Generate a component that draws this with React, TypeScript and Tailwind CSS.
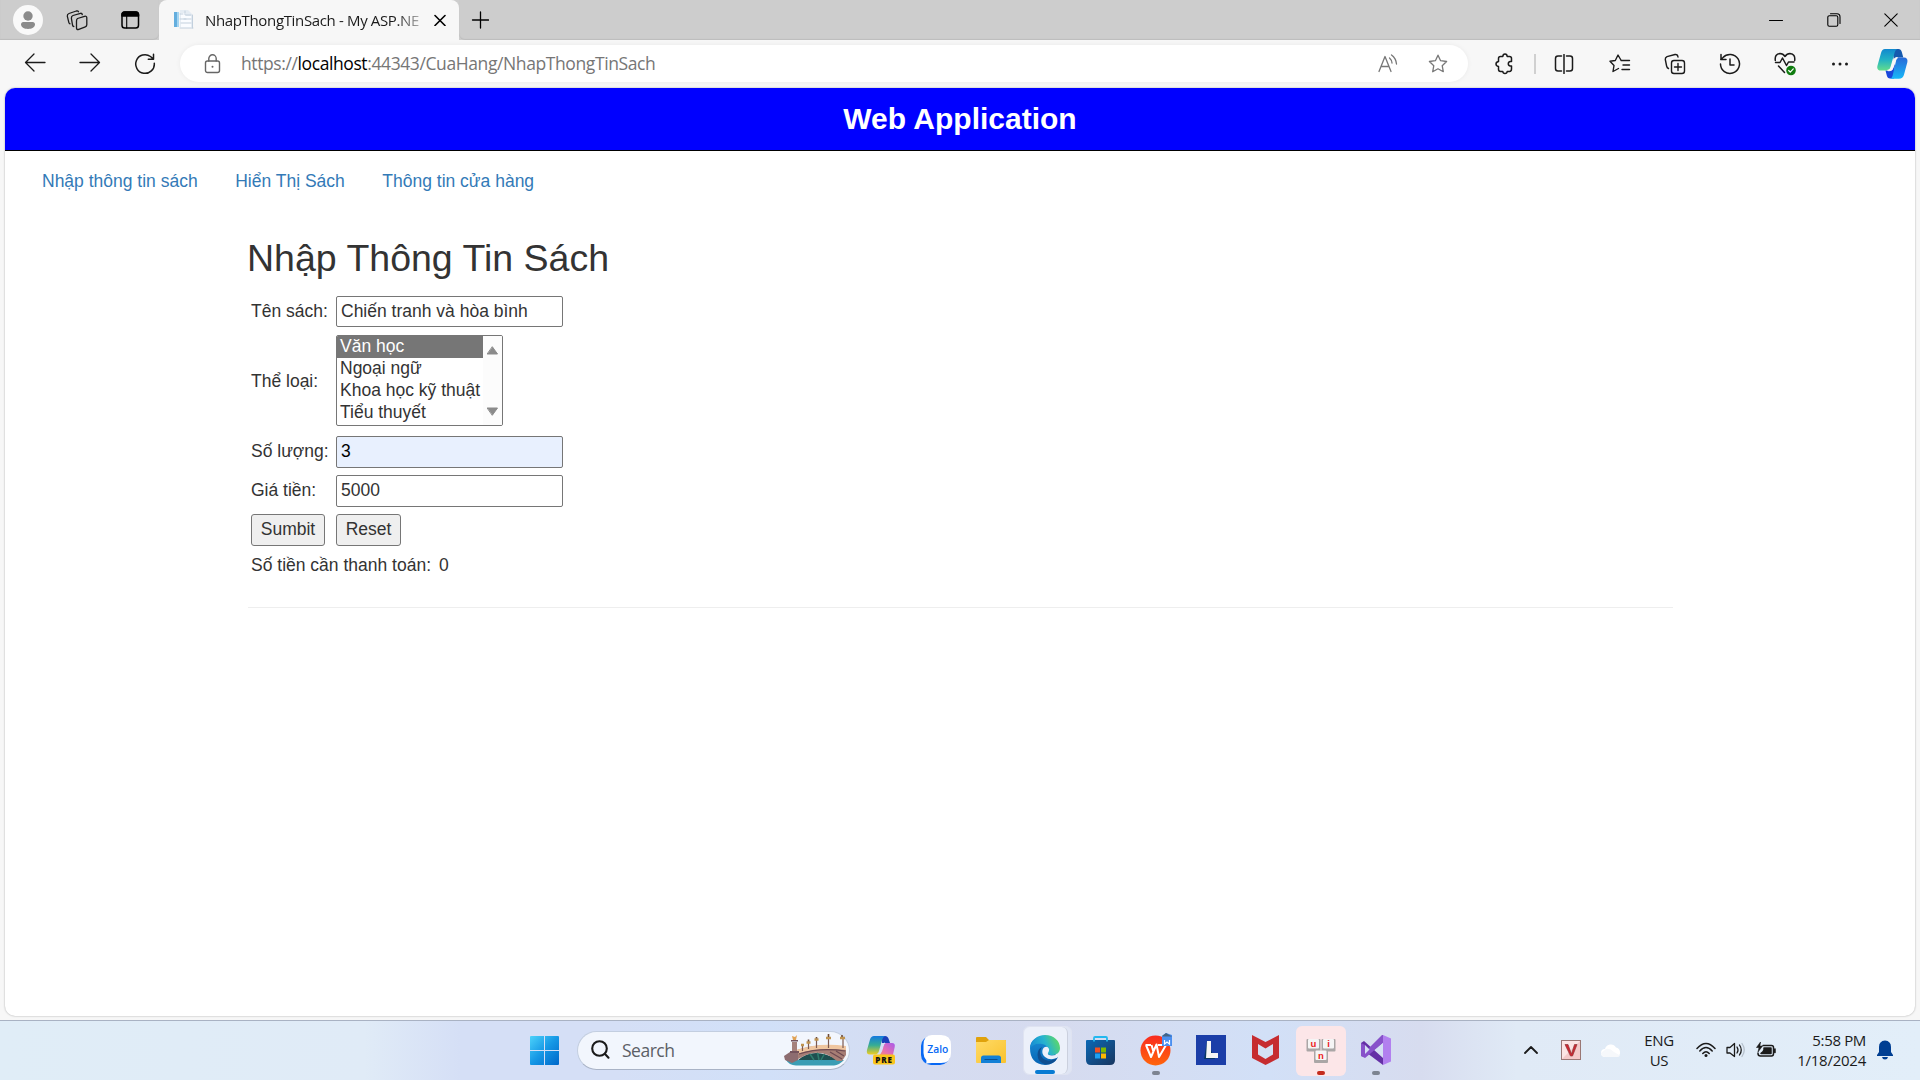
import React from "react";

type IconProps = { w?: number; h?: number; className?: string; sw?: number; children: React.ReactNode };

function Icon({ w = 20, h = 20, className = "text-[#1b1b1b]", sw = 1.3, children }: IconProps) {
  return (
    <svg
      width={w}
      height={h}
      viewBox={`0 0 ${w} ${h}`}
      fill="none"
      stroke="currentColor"
      strokeWidth={sw}
      strokeLinecap="round"
      strokeLinejoin="round"
      className={`shrink-0 ${className}`}
    >
      {children}
    </svg>
  );
}

function Slot({ className = "w-[55px]", children }: { className?: string; children: React.ReactNode }) {
  return <div className={`flex h-full shrink-0 items-center justify-center ${className}`}>{children}</div>;
}

const STAR = "M10 1.2l2.6 5.5 6 .8-4.4 4.2 1.1 6-5.3-2.900-5.300 2.900 1.100-6L1.400 7.500l6-.800z";

function TabBar() {
  return (
    <div className="flex h-10 bg-[#cdcdcd] text-[#1b1b1b]">
      <div className="flex w-[159px] shrink-0 items-center rounded-br-md shadow-[inset_0_-1px_1px_#bdbdbd]">
        <div className="ml-[13px] flex size-[30px] items-center justify-center rounded-full bg-[#f9f9f9]">
          <Icon w={16} h={20} sw={0}>
            <circle cx="8" cy="6" r="4.7" fill="#8b8b8b" />
            <path d="M1 14.3C1 13 2 12 3.200 12h9.600C14 12 15 13 15 14.300 15 17.300 12 19 8 19s-7-1.700-7-4.700z" fill="#8b8b8b" />
          </Icon>
        </div>
        <Icon w={22} h={22} className="ml-[23px] text-[#1b1b1b]" sw={1.3}>
          <path d="M11.500 9.500l7-2.200q2.300-.5 2.300 1.500v7q0 1.500-1.500 2l-6.500 2.500q-2.300.7-2.300-1.300v-7q0-1.900 1-2.500z" />
          <path d="M7.800 17.500q-1 0-1.300-1.500L5.400 9.300Q5.200 7.300 7 6.500L14.500 4.300Q16 4.100 16.300 5.500M4 14.800q-.9-.3-1.200-1.500L1.300 7.200Q1.100 5.200 3 4.500L10.300 2Q12 1.600 12.500 2.700" />
        </Icon>
        <Icon w={20} h={20} className="ml-[32px] text-black" sw={1.5}>
          <rect x="2" y="2" width="16.500" height="16" rx="2.800" />
          <path d="M2 4.800Q2 2 4.800 2h11Q18.500 2 18.500 4.800V6H2z" fill="black" />
          <path d="M6.700 6v12" strokeWidth="1.100" />
        </Icon>
      </div>
      <div className="flex w-[300px] shrink-0 items-center rounded-t-lg bg-[#f7f7f7]">
        <Icon w={20} h={20} sw={0} className="ml-[15px]">
          <rect x="0" y="2" width="5" height="15" fill="#64aede" />
          <rect x="3" y="2" width="2" height="15" fill="#a5d5f1" />
          <path d="M6 0h8l4 4v13H6z" fill="#e5ecf3" />
          <path d="M7 3h5v3h5v12H7z" fill="#fafcff" />
          <path d="M6 4h3M6 9h6M7 13h10M6 18h13M11 1v4h6M18.500 5v13M10 9h7" stroke="#c3d0dd" strokeWidth="1" />
        </Icon>
        <div className="ml-[11px] w-[217px] whitespace-nowrap font-['Open_Sans','Noto_Sans',sans-serif] text-[15px] tracking-[-0.35px] [mask-image:linear-gradient(to_right,black_88%,rgba(0,0,0,.25))]">
          NhapThongTinSach - My ASP.NE
        </div>
        <Icon w={12} h={12} className="ml-[12px] text-black" sw={1.6}>
          <path d="M1 1.500l10 10M11 1.500l-10 10" />
        </Icon>
      </div>
      <div className="flex flex-1 items-center rounded-bl-md shadow-[inset_0_-1px_1px_#bdbdbd]">
        <Icon w={18} h={18} className="ml-[12px] text-black" sw={1.3}>
          <path d="M9.500 1v16M1.500 9h16" />
        </Icon>
        <div className="ml-auto flex h-full w-[173px]">
          <Slot className="w-[58px]"><Icon w={14} h={14} sw={1.1} className="text-black"><path d="M.5 7.500h13" /></Icon></Slot>
          <Slot className="w-[57px]">
            <Icon w={14} h={14} sw={1.1} className="text-black">
              <rect x=".8" y="2.800" width="10" height="10.500" rx="1.500" />
              <path d="M3.500 .8h6.500Q13 .8 13 4v6.500" />
            </Icon>
          </Slot>
          <Slot className="w-[58px]"><Icon w={14} h={14} sw={1.1} className="text-black"><path d="M.8.8l12.400 12.400M13.200.8L.8 13.200" /></Icon></Slot>
        </div>
      </div>
    </div>
  );
}

function Toolbar() {
  return (
    <div className="flex h-12 items-center bg-[#f7f7f7]">
      <div className="flex w-[180px] shrink-0 pl-[7px]">
        <Slot><Icon w={22} h={20} sw={1.3}><path d="M21 9.500H1.500M10 1L1.500 9.500l8.500 8.500" /></Icon></Slot>
        <Slot><Icon w={22} h={20} sw={1.3}><path d="M1 9.500h19.500M12 1l8.500 8.500-8.500 8.500" /></Icon></Slot>
        <Slot>
          <Icon w={22} h={22} sw={1.5}><path d="M20.300 10.300A9.300 9.300 0 1 1 16.500 3.500L19.300 6M19.500 1.200v5h-5.200" /></Icon>
        </Slot>
      </div>
      <div className="mb-px flex h-[37px] w-[1288px] shrink-0 items-center rounded-full bg-white shadow-[0_0_5px_rgba(0,0,0,0.06)]">
        <Icon w={18} h={20} className="ml-[24px] text-[#666]" sw={1.4}>
          <rect x="1.500" y="7" width="14" height="11.500" rx="2" />
          <path d="M4.800 7V4.500a3.700 3.700 0 0 1 7.400 0V7" />
          <circle cx="8.500" cy="12.700" r="1" fill="currentColor" stroke="none" />
        </Icon>
        <div className="ml-[19px] whitespace-nowrap font-['Open_Sans','Noto_Sans',sans-serif] text-[17.5px] tracking-[-0.4px] text-[#767676]">
          https://<span className="text-black">localhost</span>:44343/CuaHang/NhapThongTinSach
        </div>
        <div className="ml-auto flex pr-[6px]">
          <Slot className="w-[50px]">
            <Icon w={20} h={20} className="text-[#777]" sw={1.3}>
              <path d="M1 17.500L7 2.500l6 15M3 12.500h8M11.500 4q2.300 2 2.500 5M13.500 1q4.500 3.200 5 9" />
            </Icon>
          </Slot>
          <Slot className="w-[49px]"><Icon className="text-[#777]" sw={1.3}><path d={STAR} /></Icon></Slot>
        </div>
      </div>
      <div className="flex flex-1 items-center pl-[8px]">
        <Slot className="w-[56px]">
          <Icon w={20} h={22} sw={1.5}>
            <path d="M6.500 3.500h2.300Q9 1 11 1t2.200 2.500h2.300q2 0 2 2V8.500h-1.200q-2 .3-2 2.300t2 2.300h1.200v3q0 2.400-2 2.400h-2.300Q13 20.500 11 20.500t-2.200-2H6.500q-2 0-2-2.200V13.500Q2 13 2 11t2.500-2.500V5.500q0-2 2-2z" />
          </Icon>
        </Slot>
        <div className="ml-[2px] h-5 w-[2px] bg-[#d0d0d0]" />
        <Slot className="w-[55px]">
          <Icon w={20} h={20} sw={1.5}><path d="M7.500 2H4Q1.500 2 1.500 4.500v10Q1.500 17 4 17h3.500M12.500 2H16q2.500 0 2.500 2.500v10Q18.500 17 16 17h-3.500M10 .5v19" /></Icon>
        </Slot>
        <Slot className="ml-px w-[55px]">
          <Icon w={22} h={20} sw={1.4}>
            <path d="M13 6.500h-.8L9 1 6.300 6.500l-5.300.8L5 11.500l-1 6L9.500 14.500M12 6.500h8.500M14 11h6.500M13 15.500h7.500" />
          </Icon>
        </Slot>
        <Slot>
          <Icon w={22} h={22} sw={1.4}>
            <rect x="7.500" y="7.500" width="13" height="13" rx="2.500" />
            <path d="M14 10.500v7M10.500 14h7M4.500 15.500Q3 15 2.600 13L1.300 6.500Q1 4.500 3 3.600L11 1.500q2.500-.5 3 2.500" />
          </Icon>
        </Slot>
        <Slot>
          <Icon w={22} h={22} sw={1.5}><path d="M1.500 11A9.500 9.500 0 1 0 4 4.500L1.800 6.500M2 1.500v5h5M11 6v6h4" /></Icon>
        </Slot>
        <Slot>
          <Icon w={22} h={24} sw={1.500}>
            <path d="M1.300 8.500Q.5 2 6 1.500 9 1.500 11 4.500 13 1.500 16 1.500 21.500 2 20.700 8.500M1.500 10.500h4.500L8.500 6l4 7.500 2-3.500h5.500M4.500 14l6 6.500" />
            <circle cx="17" cy="18.500" r="4.800" fill="#107c10" stroke="none" />
            <path d="M14.700 18.500l1.600 1.600 3-3.200" stroke="white" strokeWidth="1.200" />
          </Icon>
        </Slot>
        <Slot>
          <Icon w={18} h={6} sw={0}>
            <circle cx="2.500" cy="3" r="1.500" fill="#1b1b1b" /><circle cx="9" cy="3" r="1.500" fill="#1b1b1b" /><circle cx="15.500" cy="3" r="1.500" fill="#1b1b1b" />
          </Icon>
        </Slot>
        <Slot className="w-[51px]"><CopilotLogo /></Slot>
      </div>
    </div>
  );
}

function CopilotLogo() {
  return (
    <svg width="31" height="30" viewBox="0 0 31 30" className="shrink-0">
      <defs>
        <linearGradient id="cpa" x1="0" y1="0" x2="0" y2="1">
          <stop offset="0" stopColor="#1188cf" /><stop offset=".5" stopColor="#22b2c4" /><stop offset="1" stopColor="#63dd8c" />
        </linearGradient>
        <linearGradient id="cpb" x1="0" y1="0" x2="0" y2="1">
          <stop offset="0" stopColor="#2769d8" /><stop offset="1" stopColor="#17b7f8" />
        </linearGradient>
      </defs>
      <path d="M15 0h6.500q2.500 0 3.300 3l1.500 5.500H20q-2 0-3 3z" fill="#1559ae" />
      <path d="M8.500 21.500H14q1.500 0 2-2l2-5-1 15h-4q-2.500 0-3.200-3z" fill="#1947dc" />
      <path d="M8 0h12.500q-2 .5-2.700 3L13.500 18q-1 3.500-4.500 3.500H4Q-.5 21.500.4 17L4 4Q5 0 8 0z" fill="url(#cpa)" />
      <path d="M21.500 8.500H27q4 0 3.400 4.500l-3.500 13q-1 3.700-5 3.700H13q2-.7 2.600-3L19 12q.6-3.500 2.500-3.500z" fill="url(#cpb)" />
      <path d="M20.500 8.600Q17.500 8.500 16.500 12l-1.700 5.700q-1 3.700-4.300 3.700 4 .8 5.200-2.700L18 11.800q.7-2.700 2.500-3.200z" fill="#f7f7f7" stroke="#f7f7f7" strokeWidth="1.200" />
    </svg>
  );
}

const field = "w-[227px] rounded-[2px] border border-[#767676] pl-1 outline-none";
const categories = ["Văn học", "Ngoại ngữ", "Khoa học kỹ thuật", "Tiểu thuyết"];

function Page() {
  return (
    <div className="flex-1 bg-[#f7f7f7] px-[5px] pb-[4px]">
      <div className="h-full overflow-hidden rounded-[10px] bg-white font-['Liberation_Sans',Arial,sans-serif] text-[17.5px] leading-[25px] text-[#333] shadow-[0_0_2px_rgba(0,0,0,0.35)]">
        <header className="flex h-[63px] justify-center border-b border-black bg-[#0000ff] pt-[14px] text-[30px] font-bold leading-[33px] text-white">
          Web Application
        </header>
        <nav className="flex h-[60px] items-center gap-[37.5px] pl-[37px] text-[#337ab7]">
          <a>Nhập thông tin sách</a>
          <a>Hiển Thị Sách</a>
          <a>Thông tin cửa hàng</a>
        </nav>
        <main className="ml-[243px] w-[1425px]">
          <h2 className="-ml-px mt-[27px] whitespace-nowrap text-[37.5px] leading-[41px]">Nhập Thông Tin Sách</h2>
          <form className="ml-[3px] mt-[17px] flex flex-col">
            <div className="flex h-[31px] items-center">
              <label className="w-[85px]">Tên sách:</label>
              <input className={`h-[31px] ${field}`} defaultValue="Chiến tranh và hòa bình" />
            </div>
            <div className="mt-[8px] flex h-[91px] items-center">
              <label className="w-[85px] pt-[2px]">Thể loại:</label>
              <div className="flex h-[91px] w-[167px] overflow-hidden rounded-[2px] border border-[#767676]">
                <div className="flex-1">
                  {categories.map((c, i) => (
                    <div
                      key={c}
                      className={i === 0 ? "h-[22px] whitespace-nowrap bg-[#767676] pl-[3px] leading-[20px] text-white" : "h-[22px] whitespace-nowrap pl-[3px] leading-[20px]"}
                    >
                      {c}
                    </div>
                  ))}
                </div>
                <div className="flex w-[19px] flex-col items-center justify-between bg-[#fcfcfc] pb-[9px] pt-[10px]">
                  <Icon w={11} h={9} sw={1} className="text-[#8b8b8b]"><path d="M5.500 1L10.500 8H.5z" fill="currentColor" /></Icon>
                  <Icon w={11} h={9} sw={1} className="text-[#8b8b8b]"><path d="M5.500 8L10.500 1H.5z" fill="currentColor" /></Icon>
                </div>
              </div>
            </div>
            <div className="mt-[10px] flex h-8 items-center">
              <label className="w-[85px] pb-0.5">Số lượng:</label>
              <input className={`h-8 bg-[#e8f0fe] pb-0.5 text-black ${field}`} defaultValue="3" />
            </div>
            <div className="mt-[7px] flex h-8 items-center">
              <label className="w-[85px] pb-0.5">Giá tiền:</label>
              <input className={`h-8 pb-0.5 ${field}`} defaultValue="5000" />
            </div>
            <div className="mt-[7px] flex h-8">
              <button type="button" className="mr-[11px] w-[74px] rounded-[3px] border border-[#767676] bg-[#efefef] pb-0.5">Sumbit</button>
              <button type="button" className="w-[65px] rounded-[3px] border border-[#767676] bg-[#efefef] pb-0.5">Reset</button>
            </div>
            <div className="mt-[7px] flex gap-[8px]">
              <span>Số tiền cần thanh toán:</span>
              <span>0</span>
            </div>
          </form>
          <div className="mt-[29px] h-px bg-[#eeeeee]" />
        </main>
      </div>
    </div>
  );
}

function BridgeArt() {
  return (
    <svg width="64" height="32" viewBox="0 0 64 32" className="shrink-0">
      <path d="M2 26h58q-5 5-10 5.500H12Q5 31 2 26z" fill="#3b9db4" />
      <path d="M14 26Q30 12 54 26z" fill="#1f4f50" />
      <path d="M24 17l6 9M33 16l2 10M42 17l-5 9" stroke="#2f7d6e" strokeWidth="1.500" />
      <path d="M10 17Q34 8 62 13v8l-4 6h-5Q36 12 16 24l-6 3z" fill="#a77e75" />
      <path d="M12 16Q36 8 62 12v4Q36 13 12 20z" fill="#efc6a0" />
      <path d="M15 20Q36 13 61 17M46 18l12 7M52 17l8 5" stroke="#6d4a52" strokeWidth="1.200" fill="none" />
      <path d="M0 22l6-4h8v8l-6 3-7-3z" fill="#8d6c70" />
      <path d="M8 8h5v11H8z" fill="#a5817c" /><path d="M7 6h7v1.500H7zM6 17h9v2H6z" fill="#74535c" />
      <path d="M9 6l-1-4 3 1 2-2-1 5z" fill="#e0a254" />
      <path d="M18.500 11v6M24.500 8v7M32.500 6v8M44.500 5v9M59 5v9" stroke="#7d5a50" strokeWidth="1.200" />
      <path d="M17 11h3M22.500 8.500h4M30.500 5.500h4M42 4h5M56 4h5" stroke="#c09450" strokeWidth="2.400" />
      <path d="M24.500 5.500v2M32.500 3v1.500M44.500 0v3M58 1v2" stroke="#6f4c38" strokeWidth="1.600" />
    </svg>
  );
}

function Taskbar() {
  return (
    <div className="flex h-[60px] items-center border-t border-[#a9b2c3] bg-[linear-gradient(90deg,#e0edf7_0%,#e0ebf7_19%,#d5dff6_24%,#d5dff6_32%,#d1e0f8_40%,#d5dcf1_48%,#d6dbef_55%,#d2e0f7_66%,#d7dcef_74%,#e0eaf6_79%,#e2eef9_100%)] font-['Open_Sans','Noto_Sans',sans-serif]">
      <div className="flex w-[577px] shrink-0 justify-end pb-px pr-[18px]">
        <svg width="29" height="29" viewBox="0 0 29 29">
          <defs>
            <linearGradient id="win" x1="0" y1="0" x2="1" y2="1">
              <stop offset="0" stopColor="#4cd2fa" /><stop offset=".5" stopColor="#1597e5" /><stop offset="1" stopColor="#0067c9" />
            </linearGradient>
          </defs>
          <path d="M1 0h13v14H0V1q0-1 1-1zM15 0h13q1 0 1 1v13H15zM0 15h14v14H1q-1 0-1-1zM15 15h14v13q0 1-1 1H15z" fill="url(#win)" />
        </svg>
      </div>
      <div className="mb-px flex h-[39px] w-[273px] shrink-0 items-center rounded-full border border-[#c3cee0] border-b-[#a9b3c6] bg-[#f2f6fd] pl-[12px]">
        <Icon w={20} h={20} sw={2.1}><circle cx="9.500" cy="8.500" r="7.300" /><path d="M14.800 13.800l3.700 3.900" /></Icon>
        <span className="ml-[12px] text-[17.5px] tracking-[-0.5px] text-[#5c5f66]">Search</span>
        <div className="ml-auto pr-px"><BridgeArt /></div>
      </div>
      <div className="flex h-full pl-[3px]">
        <Slot>
          <svg width="30" height="30" viewBox="0 0 30 30" className="mb-px">
            <defs>
              <linearGradient id="pa" x1="0" y1="0" x2="0" y2="1"><stop offset="0" stopColor="#1479df" /><stop offset=".5" stopColor="#36ad94" /><stop offset="1" stopColor="#f0cd20" /></linearGradient>
              <linearGradient id="pb" x1="1" y1="0" x2="0" y2="1"><stop offset="0" stopColor="#a85bea" /><stop offset=".6" stopColor="#e770b0" /><stop offset="1" stopColor="#fa9368" /></linearGradient>
            </defs>
            <path d="M15 1h4q3 0 4 4l1 3h-8z" fill="#1b3fb9" />
            <path d="M8 1h11q-2 1-3 4l-3 11q-1 3.500-4 3.500H4Q0 19.500 1 15L4 4.500Q5 1 8 1z" fill="url(#pa)" />
            <path d="M20 8h6q3.500 0 2.700 4l-2 9H12q2-.5 2.800-3l2-7Q17.700 8 20 8z" fill="url(#pb)" />
            <path d="M19 8q-2.500 0-3.500 3.500l-1.500 5Q13 19.500 11 19.500q3.500 0 4.500-3l1.500-5q.7-2.700 2-3.500z" fill="#d5dff6" stroke="#d5dff6" />
            <rect x="7" y="19.500" width="22" height="10" rx="2" fill="#f9c51b" />
            <text x="18" y="27.500" textAnchor="middle" fontFamily="Open Sans" fontWeight="800" fontSize="8" letterSpacing=".8" fill="#111">PRE</text>
          </svg>
        </Slot>
        <Slot>
          <svg width="30" height="30" viewBox="0 0 30 30" className="mb-[2px]">
            <rect x="0" y="1" width="29" height="29" rx="10" fill="#0868f4" />
            <path d="M11 0h9q10 0 10 10v8q0 10-10 10h-9q-3.500 0-6 .7.700-1.700.3-3.500Q2.500 22 2.500 18v-8Q2.500 0 11 0z" fill="white" />
            <text x="16.800" y="17.500" textAnchor="middle" fontFamily="Open Sans" fontWeight="600" fontSize="10.300" fill="#0868f4">Zalo</text>
          </svg>
        </Slot>
        <Slot>
          <svg width="30" height="28" viewBox="0 0 30 28" className="mb-px">
            <defs><linearGradient id="fo" x1="0" y1="0" x2="1" y2="1"><stop offset="0" stopColor="#ffda66" /><stop offset="1" stopColor="#f9c22e" /></linearGradient></defs>
            <path d="M0 2Q0 1 1 1h9l3 3h16q1 0 1 1v5H0z" fill="#e0a20c" />
            <path d="M0 6h10l3-2h16q1 0 1 1v21q0 1-1 1H1q-1 0-1-1z" fill="url(#fo)" />
            <path d="M5 27v-5q0-2.500 2.500-2.500h15Q25 19.500 25 22v5z" fill="#1380d6" /><path d="M8.500 23.500h13" stroke="#0a4f91" />
          </svg>
        </Slot>
        <Slot>
          <div className="ml-[3px] flex h-[49px] w-[49px] shrink-0 rounded-md border border-[#dfe3f1] bg-[#dfe5f4]">
            <div className="flex w-[44px] flex-col items-center justify-between rounded-md border-r border-[#cbd0de] bg-[#ecf0fa] pt-[8px]">
              <svg width="30" height="30" viewBox="0 0 30 30">
                <defs>
                  <linearGradient id="ea" x1="0" y1=".5" x2="1" y2=".2"><stop offset="0" stopColor="#168bd3" /><stop offset=".5" stopColor="#27b4cf" /><stop offset="1" stopColor="#65dd59" /></linearGradient>
                  <linearGradient id="eb" x1="0" y1="0" x2="0" y2="1"><stop offset="0" stopColor="#1a91d8" /><stop offset="1" stopColor="#0864b4" /></linearGradient>
                </defs>
                <path d="M0 13C0 5 7 1 15 1l10 18 3 3q-4 8-13 8Q0 29 0 13z" fill="url(#eb)" />
                <path d="M0 14C1 5 7 0 15 0c9 0 15 6 15 13 0 5-4 7-8 7-3 0-5-1-4-2.500C20 15 18 10 12 9 6 8 2 10 0 14z" fill="url(#ea)" />
                <path d="M12 12q-4 6 1 11.500 5 4.500 14.500-.5Q24 29 16 29.500 8 28 7.500 20q0-6 4.500-8z" fill="#104f91" />
                <path d="M12.500 15q1.500-4 5-3 3 2 .5 6-1 2 4 2.500 4 0 7-2-.5 2.500-1.700 4.300Q20 26 15 22q-3.500-3-2.500-7z" fill="#ecf0fa" />
              </svg>
              <div className="h-1 w-5 rounded-full bg-[#087bd3]" />
            </div>
          </div>
        </Slot>
        <Slot>
          <svg width="29" height="29" viewBox="0 0 29 29" className="mb-px">
            <defs><linearGradient id="st" x1="0" y1="0" x2="1" y2="1"><stop offset="0" stopColor="#0b68b5" /><stop offset="1" stopColor="#19365f" /></linearGradient></defs>
            <path d="M0 5q0-1 1-1h27q1 0 1 1v19q0 5-5 5H5q-5 0-5-5z" fill="url(#st)" />
            <path d="M8 5.500V2q0-1 1-1h11q1 0 1 1v3.500" stroke="#23b8ef" strokeWidth="1.800" fill="none" />
            <path d="M9 11.500h5v5H9z" fill="#f25022" /><path d="M15 11.500h5v5h-5z" fill="#7fba00" /><path d="M9 17.500h5v5H9z" fill="#1da1f2" /><path d="M15 17.500h5v5h-5z" fill="#ffb900" />
          </svg>
        </Slot>
        <Slot className="relative w-[55px]">
          <svg width="34" height="33" viewBox="0 0 34 33" className="mb-[3px] ml-[3px]">
            <defs><linearGradient id="wp" x1="0" y1="0" x2="0" y2="1"><stop offset="0" stopColor="#f92c20" /><stop offset="1" stopColor="#ff650b" /></linearGradient></defs>
            <circle cx="15.500" cy="17.500" r="15" fill="url(#wp)" />
            <path d="M5.500 12h5.500M6 12l5 12 5.500-12.500 2.500 12.500 7-12h-8M11.500 12l2 7" stroke="white" strokeWidth="2" fill="none" strokeLinejoin="round" />
            <path d="M22 3l4-3 6 2v11H22z" fill="#4b8ff0" /><path d="M22 3l4-3 6 3.500h-9z" fill="#426485" />
            <path d="M24.500 7v4l2.500-2 2.500 2V7" stroke="white" strokeWidth="1.200" fill="none" />
          </svg>
          <div className="absolute bottom-[5px] h-1 w-2 rounded-full bg-[#7d8491]" />
        </Slot>
        <Slot>
          <svg width="30" height="30" viewBox="0 0 30 30" className="mb-[2px]">
            <path d="M0 0h30v30H0z" fill="#1b3ea8" /><path d="M11 6L8 24h11z" fill="#083764" /><path d="M11 6h4v12h7v5H10z" fill="#f4f4f4" />
          </svg>
        </Slot>
        <Slot>
          <svg width="27" height="30" viewBox="0 0 27 30" className="mb-px"><path d="M0 0l13.500 7L27 0v23l-13.500 7L0 23z" fill="#c62c30" /><path d="M6 9l7.500 4.500L21 9v10.500L13.500 24 6 19.500z" fill="#d4e0f4" /></svg>
        </Slot>
        <Slot className="relative w-[55px]">
          <div className="flex h-[50px] w-[50px] items-center justify-center rounded-md bg-[#fce6e8]">
            <svg width="30" height="26" viewBox="0 0 30 26">
              {[{ x: 0.5, y: 1, t: "u" }, { x: 15.5, y: 1, t: "i" }, { x: 8, y: 12.5, t: "n" }].map((k) => (
                <g key={k.t}>
                  <rect x={k.x} y={k.y} width="14" height="12.500" rx="1" fill="#aaa6a6" />
                  <rect x={k.x + 1.5} y={k.y} width="11" height="9.500" rx="1" fill="#f5f5f5" />
                  <text x={k.x + 7} y={k.y + 8} textAnchor="middle" fontFamily="Liberation Sans" fontWeight="700" fontSize="9.500" fill="#ed2225">{k.t}</text>
                </g>
              ))}
            </svg>
          </div>
          <div className="absolute bottom-[5px] h-1 w-2 rounded-full bg-[#c42b1c]" />
        </Slot>
        <Slot className="relative w-[55px]">
          <svg width="30" height="30" viewBox="0 0 30 30" className="mb-px">
            <path d="M0 8l3-2 19 17v7L4 16.500V22l-4-1z" fill="#6430a6" />
            <path d="M0 21V8l4 2v9zM22 0v8L4 23l-4-2L21 0z" fill="#8752ca" />
            <path d="M22 0l8 3.500v23L22 30z" fill="#b280ef" />
            <path d="M22 8v13l-8-6z" fill="#d4dff4" /><path d="M4 10v9l4.500-4.500z" fill="#d4dff4" />
          </svg>
          <div className="absolute bottom-[5px] h-1 w-2 rounded-full bg-[#7d8491]" />
        </Slot>
      </div>
      <div className="ml-auto flex h-full w-[407px] shrink-0 items-center pb-px text-[#1b1b1b]">
        <Icon w={14} h={8} sw={1.8} className="ml-[11px]"><path d="M1 7l6-6 6 6" /></Icon>
        <svg width="20" height="20" viewBox="0 0 20 20" className="ml-[23px]">
          <rect x=".5" y=".5" width="19" height="19" fill="#f4c9c9" stroke="#9a7774" />
          <path d="M1 1h18L1 19z" fill="#fbe4e4" /><path d="M4 4.500h3L10.500 14l3-9.500H16L11.500 16h-2z" fill="#cf2630" stroke="#8c373a" strokeWidth=".7" />
        </svg>
        <svg width="20" height="13" viewBox="0 0 20 13" className="ml-[20px]">
          <path d="M4 13a4 4 0 0 1 0-8 6 6 0 0 1 11-1.500A5 5 0 0 1 16 13z" fill="#fff" /><path d="M5 5q4-1 8 3l6 3.500Q18 13 16 13H4Q0 12 0 9z" fill="#f6f8fb" />
        </svg>
        <div className="ml-[19px] w-[38px] text-center text-[15px] leading-[20px] tracking-[-0.4px]">
          <div>ENG</div>
          <div>US</div>
        </div>
        <Icon w={20} h={16} sw={1.5} className="ml-[18px]">
          <path d="M1 6.500q9-10 18 0M3.800 9q6.200-7 12.400 0M6.800 11.500q3.200-3.500 6.400 0" /><circle cx="10" cy="13.500" r="1.500" fill="currentColor" stroke="none" />
        </Icon>
        <Icon w={20} h={16} sw={1.3} className="ml-[10px]">
          <path d="M1 5.500h3L8.500 1.500v13L4 11H1z" /><path d="M11 5q2 3 0 6M13.500 3q3.500 5 0 10" /><path d="M16 1.500q4.500 6.500 0 13" stroke="#b6c0cb" />
        </Icon>
        <Icon w={20} h={17} sw={1.5} className="ml-[10px]">
          <path d="M7 3.500h8.500q2 0 2 2v6q0 2.500-2 2.500H4.500q-2.500 0-2.500-2.500V11M19 7v3.500" /><path d="M8 6h7v5.500H5q2.500-1.500 3-3.500z" fill="currentColor" /><path d="M4.500 0L.5 5.500H3L2 10l4.500-6H4z" fill="currentColor" strokeWidth=".6" />
        </Icon>
        <div className="ml-auto mr-[10px] text-right text-[15px] leading-[20px] tracking-[-0.25px]">
          <div className="tracking-[-0.35px]">5:58 PM</div>
          <div>1/18/2024</div>
        </div>
        <Icon w={18} h={20} sw={0} className="mr-[26px]">
          <path d="M9 .5q6 .5 6 6.500v5l2 3v1H1v-1l2-3V7Q3 1 9 .5zM6 17h6q-.5 2.500-3 2.500T6 17z" fill="#003e92" />
        </Icon>
      </div>
    </div>
  );
}

export default function App() {
  return (
    <div className="flex h-[1080px] w-[1920px] flex-col overflow-hidden">
      <TabBar />
      <Toolbar />
      <Page />
      <Taskbar />
    </div>
  );
}
